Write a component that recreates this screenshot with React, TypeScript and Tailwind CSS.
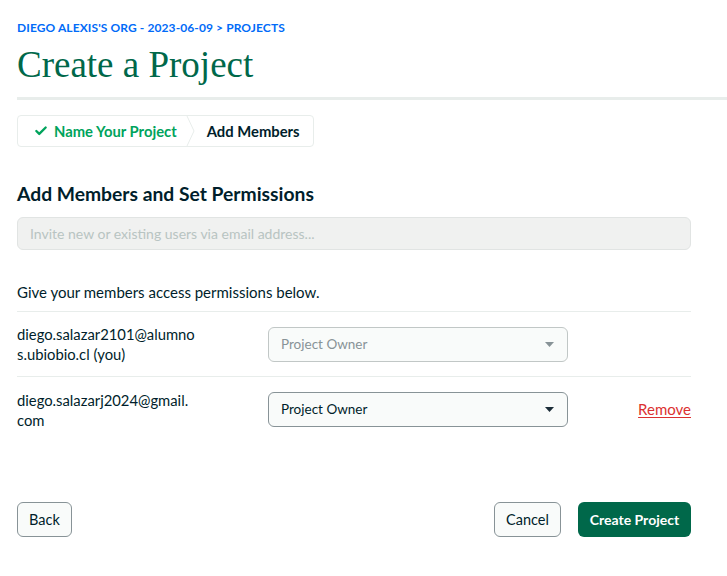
import { Check } from 'lucide-react'

type Member = {
  email: string,
  you?: boolean,
}

const members: Member[] = [
  { email: 'diego.salazar2101@alumnos.ubiobio.cl', you: true },
  { email: 'diego.salazarj2024@gmail.com' },
]

function Caret({ dim }: { dim?: boolean }) {
  return (
    <svg width="9" height="5" viewBox="0 0 9 5" className={dim ? 'fill-[#889397]' : 'fill-[#1c2d38]'}>
      <path d="M0 0h9L4.5 5z" />
    </svg>
  )
}

export default function App() {
  return (
    <div className="min-h-[576px] bg-white pl-[17px] pt-[20px] font-['Lato',sans-serif] text-[#001E2B]">
      <div className="text-[12px] font-bold leading-4 tracking-[0.1px] text-[#016BF8]">
        DIEGO ALEXIS'S ORG - 2023-06-09 &gt; PROJECTS
      </div>
      <h1 className="mt-[8px] font-['Liberation_Serif',serif] text-[37px] leading-[42px] text-[#00684A]">
        Create a Project
      </h1>
      <div className="mt-[11px] h-[3px] bg-[#E8EDEB]" />

      <div className="w-[674px]">
        <div className="mt-[15px] flex h-[32px] w-[297px] items-stretch rounded-[4px] border border-[#E8EDEB] text-[14.8px] font-bold">
          <div className="flex items-center gap-[6px] pl-[16px] pr-[9px] text-[#00A35C]">
            <Check size={14} strokeWidth={4} />
            <span>Name Your Project</span>
          </div>
          <svg width="10" height="30" viewBox="0 0 10 30" className="shrink-0">
            <path d="M1 0L8 15L1 30" fill="none" stroke="#E8EDEB" strokeWidth="1" />
          </svg>
          <div className="flex items-center pl-[11px] text-[#001E2B]">Add Members</div>
        </div>

        <h2 className="mt-[35px] text-[19.3px] font-bold leading-6">Add Members and Set Permissions</h2>

        <input
          type="text"
          disabled
          placeholder="Invite new or existing users via email address..."
          className="mt-[11px] h-[33px] w-full rounded-[6px] border border-[#E1E4E3] bg-[#F0F1F0] px-[12px] text-[14px] placeholder:text-[#B8C4C2]"
        />

        <p className="mt-[32px] text-[15px] leading-5">Give your members access permissions below.</p>

        <div className="mt-[9px] border-t border-[#E8EDEB]">
          {members.map((m) => (
            <div key={m.email} className="flex h-[65px] items-center border-b border-[#E8EDEB] last:border-b-0">
              <div className="w-[178px] break-all text-[14.8px] leading-5">
                {m.email}{m.you ? ' (you)' : ''}
              </div>
              <div
                className={`ml-[73px] flex h-[35px] w-[300px] items-center justify-between rounded-[6px] border bg-[#F9FBFA] pl-[12px] pr-[13px] text-[13.5px] ${m.you ? 'border-[#C1C7C6] text-[#889397]' : 'border-[#889397] text-[#001E2B]'}`}
              >
                <span>Project Owner</span>
                <Caret dim={m.you} />
              </div>
              {!m.you && (
                <a href="#" className="ml-auto text-[15px] text-[#DB3030] underline underline-offset-2">
                  Remove
                </a>
              )}
            </div>
          ))}
        </div>

        <div className="mt-[60px] flex items-center">
          <button className="h-[35px] w-[55px] rounded-[6px] border border-[#889397] bg-[#F9FBFA] text-[14.5px]">
            Back
          </button>
          <button className="ml-auto h-[35px] w-[67px] rounded-[6px] border border-[#889397] bg-[#F9FBFA] text-[14.5px]">
            Cancel
          </button>
          <button className="ml-[17px] h-[35px] w-[113px] rounded-[6px] bg-[#00684A] text-[14px] font-bold text-white">
            Create Project
          </button>
        </div>
      </div>
    </div>
  )
}
